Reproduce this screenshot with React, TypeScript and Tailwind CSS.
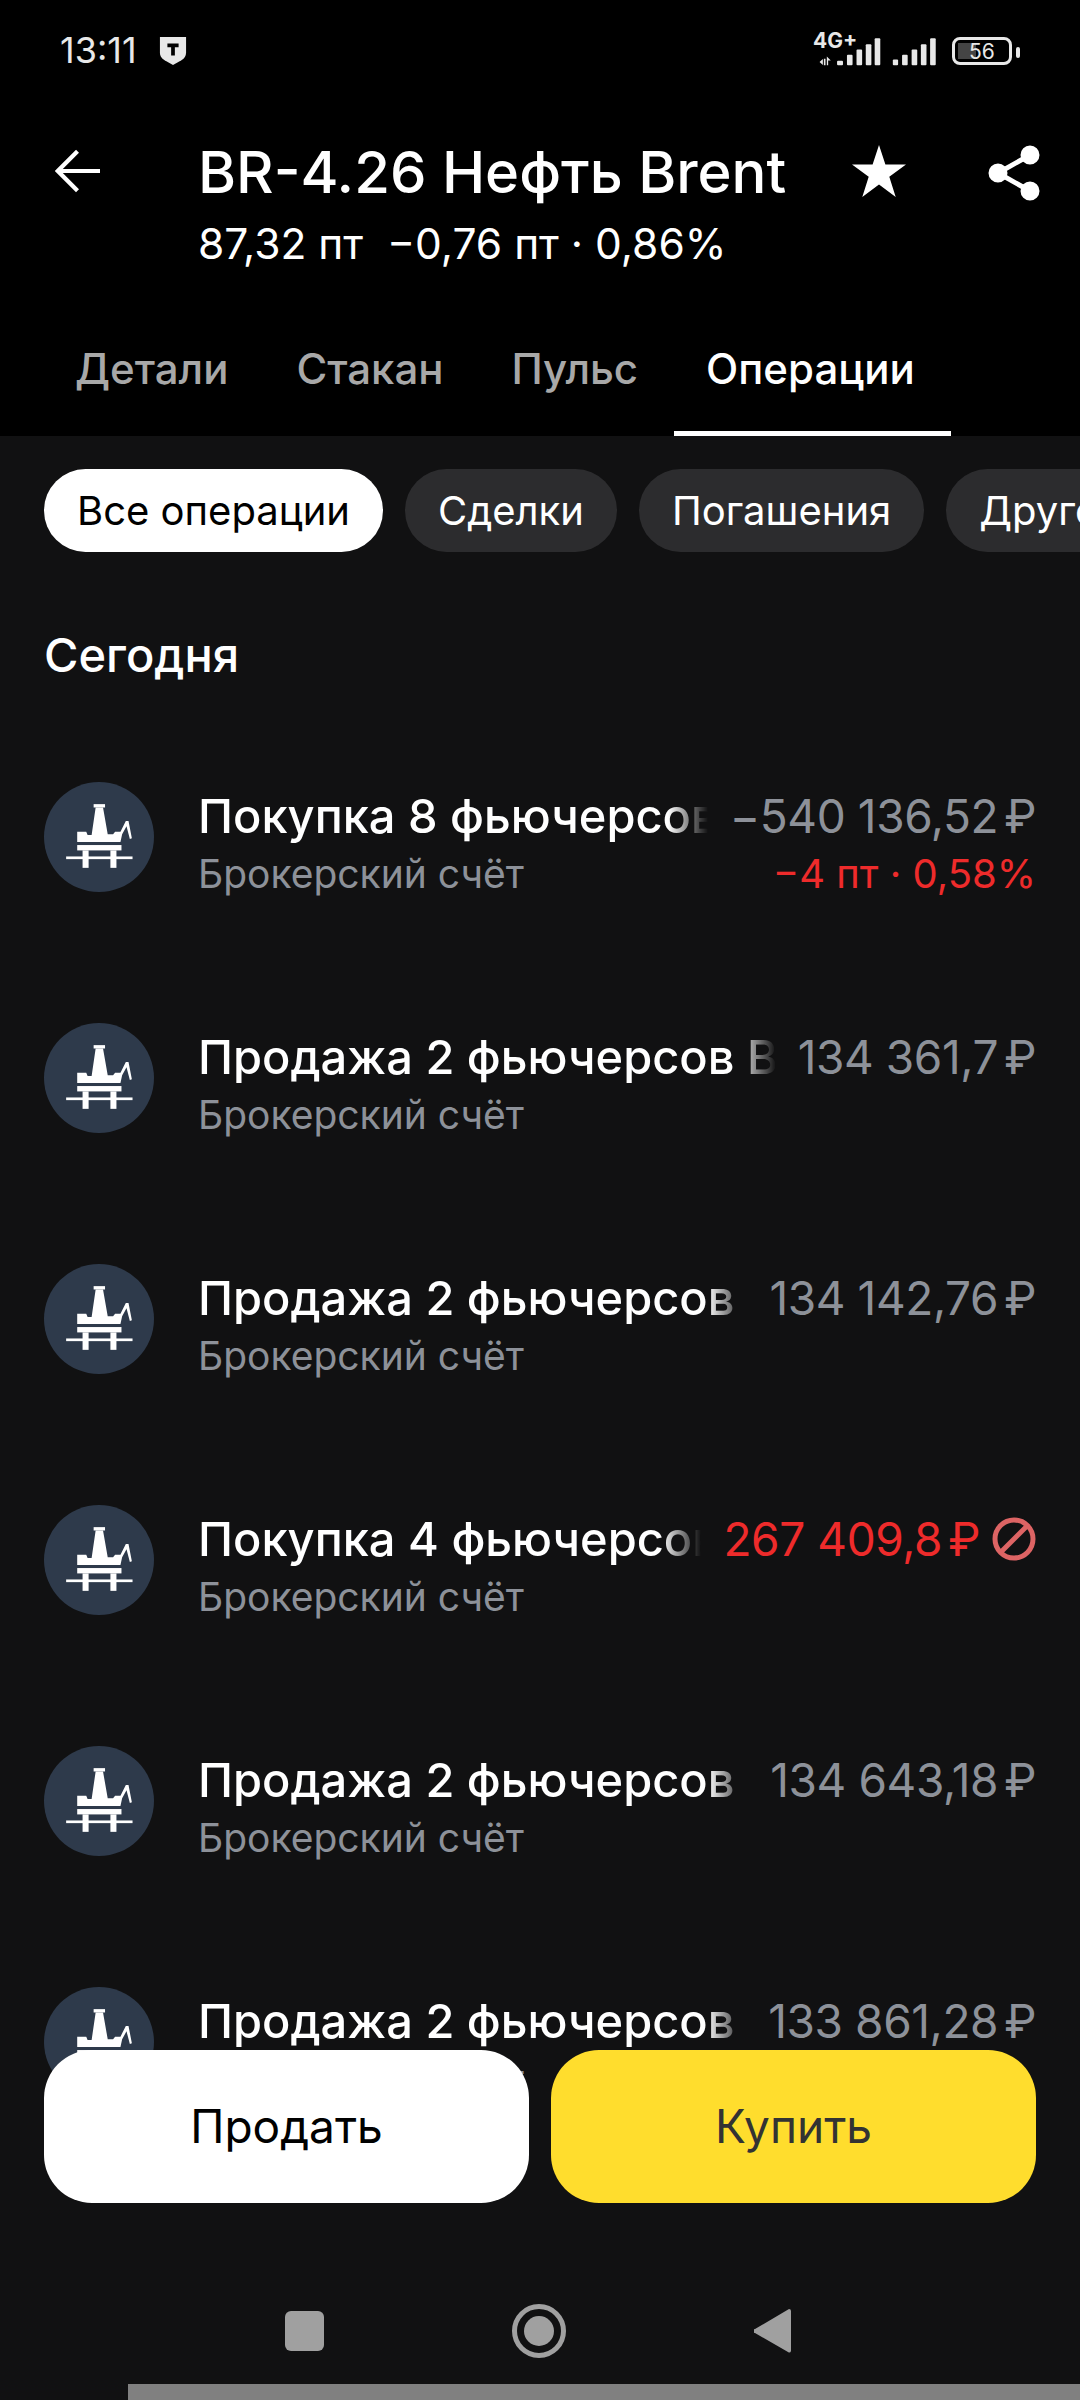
const operations = [
  { title: 'Покупка 8 фьючерсов BR-4.26 Нефть Brent', amount: '−540 136,52', detail: '−4 пт · 0,58%' },
  { title: 'Продажа 2 фьючерсов BR-4.26 Нефть Brent', amount: '134 361,7' },
  { title: 'Продажа 2 фьючерсов BR-4.26 Нефть Brent', amount: '134 142,76' },
  { title: 'Покупка 4 фьючерсов BR-4.26 Нефть Brent', amount: '267 409,8', failed: true },
  { title: 'Продажа 2 фьючерсов BR-4.26 Нефть Brent', amount: '134 643,18' },
  { title: 'Продажа 2 фьючерсов BR-4.26 Нефть Brent', amount: '133 861,28' },
];

function RigIcon() {
  return (
    <svg viewBox="72 66 328 328" className="w-[110px] h-[110px] shrink-0">
      <circle cx="236" cy="230" r="164" fill="#2e3a4b" />
      <g fill="#fff">
        <rect x="220" y="132" width="34" height="10" />
        <polygon points="226,142 248,142 262,222 278,222 284,214 300,214 316,182 324,182 334,234 328,236 318,198 305,222 300,245 171,245 171,214 198,214 202,224 214,224" />
        <rect x="171" y="254" width="132" height="16" />
        <rect x="187" y="270" width="18" height="52" />
        <rect x="270" y="270" width="18" height="52" />
        <rect x="138" y="288" width="198" height="8" />
      </g>
    </svg>
  );
}

function SignalBars() {
  return (
    <svg viewBox="100 40 375 100" className="w-[125px] h-[33px]" fill="#e8e8e8">
      <path d="M118 122l10-9v18zM131 112h5v20h-5zM140 105l12 12h-8v15h-4z" />
      <rect x="171" y="118" width="18" height="14" rx="3" />
      <rect x="201" y="100" width="17" height="32" rx="3" />
      <rect x="230" y="84" width="17" height="48" rx="3" />
      <rect x="258" y="68" width="17" height="64" rx="3" />
      <rect x="285" y="50" width="17" height="82" rx="3" />
      <rect x="340" y="114" width="16" height="18" rx="3" />
      <rect x="368" y="100" width="17" height="32" rx="3" />
      <rect x="397" y="84" width="17" height="48" rx="3" />
      <rect x="425" y="68" width="17" height="64" rx="3" />
      <rect x="453" y="50" width="17" height="82" rx="3" />
    </svg>
  );
}

function StatusBar() {
  return (
    <div className="h-[100px] flex items-center justify-between pl-[60px] pr-[68px] text-[#e8e8e8]">
      <div className="flex items-center gap-[22px]">
        <span className="text-[36px] leading-none">13:11</span>
        <svg viewBox="0 0 30 32" className="w-[28px] h-[30px]">
          <path d="M1 2h28v17q0 5-5 8l-9 5-9-5q-5-3-5-8z" fill="#e8e8e8" />
          <path d="M9 9h12v4h-4v9h-4v-9h-4z" fill="#000" />
        </svg>
      </div>
      <div className="relative flex items-center gap-[14px] mt-[2px]">
        <SignalBars />
        <span className="absolute left-[0px] top-[-5px] text-[21px] leading-none font-bold text-[#e8e8e8]">4G+</span>
        <div className="relative w-[60px] h-[28px] rounded-[8px] border-[3px] border-[#e8e8e8] flex items-center justify-center overflow-hidden">
          <div className="absolute left-[3px] top-[3px] bottom-[3px] w-[18px] bg-[#444]" />
          <span className="relative text-[21px] leading-none text-[#e8e8e8]">56</span>
        </div>
        <div className="absolute right-[-8px] top-[12px] w-[4px] h-[11px] rounded-[2px] bg-[#e8e8e8]" />
      </div>
    </div>
  );
}

function Header() {
  return (
    <div className="bg-black h-[436px] text-white flex flex-col">
      <StatusBar />
      <div className="flex pt-[36px] h-[200px]">
        <div className="w-[198px] pl-[55px] pt-[13px] shrink-0">
          <svg viewBox="0 0 48 46" className="w-[45px] h-[44px]" fill="none" stroke="#fff" strokeWidth="4.5">
            <path d="M2 23h46M24 2L3 23l21 21" />
          </svg>
        </div>
        <div className="flex-1">
          <div className="text-[58px] leading-[72px] font-medium whitespace-nowrap">BR-4.26 Нефть Brent</div>
          <div className="text-[42.5px] leading-[50px] mt-[11px] whitespace-pre">87,32 пт  −0,76 пт · 0,86%</div>
        </div>
        <div className="flex gap-[82px] pr-[40px] pt-[9px]">
          <svg viewBox="0 0 54 52" className="w-[54px] h-[52px]" fill="#fff">
            <polygon points="27,0 33.4,19.6 54,19.6 37.3,31.8 43.7,52 27,39.5 10.3,52 16.7,31.8 0,19.6 20.6,19.6" />
          </svg>
          <svg viewBox="0 0 52 56" className="w-[52px] h-[56px]" fill="#fff" stroke="#fff" strokeWidth="5">
            <circle cx="42" cy="10" r="7" />
            <circle cx="10" cy="28" r="7" />
            <circle cx="42" cy="46" r="7" />
            <path d="M42 10L10 28l32 18" fill="none" />
          </svg>
        </div>
      </div>
      <div className="flex pl-[41px] h-[136px] items-end text-[42px] text-[#a8a8a8] font-[450]">
        <div className="px-[34px] h-[136px] flex items-center">Детали</div>
        <div className="px-[34px] h-[136px] flex items-center">Стакан</div>
        <div className="pl-[34px] pr-[36px] h-[136px] flex items-center">Пульс</div>
        <div className="pl-[32px] pr-[36px] h-[136px] flex items-center pt-[5px] text-white border-b-[5px] border-white">Операции</div>
      </div>
    </div>
  );
}

function Filters() {
  return (
    <div className="flex gap-[22px] pl-[44px] pt-[33px] overflow-hidden text-[40px]">
      <div className="h-[83px] px-[33px] rounded-[42px] bg-white text-black flex items-center shrink-0">Все операции</div>
      <div className="h-[83px] px-[33px] rounded-[42px] bg-[#2c2c2e] text-white flex items-center shrink-0">Сделки</div>
      <div className="h-[83px] px-[33px] rounded-[42px] bg-[#2c2c2e] text-white flex items-center shrink-0">Погашения</div>
      <div className="h-[83px] px-[33px] rounded-[42px] bg-[#2c2c2e] text-white flex items-center shrink-0">Другое</div>
    </div>
  );
}

function OperationRow({ title, amount, detail, failed }: { title: string; amount: string; detail?: string; failed?: boolean }) {
  return (
    <div className="h-[241px] flex items-center gap-[44px] pr-[44px]">
      <RigIcon />
      <div className="flex-1 flex min-w-0 items-start gap-[22px] h-[110px] pt-[5px]">
        <div className="flex-1 min-w-0">
          <div className="text-[47px] leading-[58px] text-white font-medium whitespace-nowrap overflow-hidden [mask-image:linear-gradient(to_left,transparent,black_40px)]">{title}</div>
          <div className="text-[39px] leading-[46px] mt-[6px] text-[#8d9199] whitespace-nowrap">Брокерский счёт</div>
        </div>
        <div className="shrink-0 flex flex-col items-end">
          <div className="flex items-center gap-[12px] leading-[58px]">
            <span className={failed ? 'text-[46px] tracking-[-0.4px] text-[#ee2b2b]' : 'text-[46px] tracking-[-0.4px] text-[#8d9199]'}>
              {amount}
              <span className="ml-[6px]">₽</span>
            </span>
            {failed && (
              <svg viewBox="0 0 44 44" className="w-[44px] h-[44px]" fill="none" stroke="#dd6464" strokeWidth="5">
                <circle cx="22" cy="22" r="19" />
                <path d="M9 35L35 9" />
              </svg>
            )}
          </div>
          {detail && <div className="text-[40px] leading-[46px] mt-[6px] text-[#ee2b2b] whitespace-nowrap">{detail}</div>}
        </div>
      </div>
    </div>
  );
}

function NavBar() {
  return (
    <div className="absolute left-0 right-0 bottom-0 h-[197px] bg-[#111112]">
      <div className="absolute left-[285px] top-[108px] w-[39px] h-[40px] rounded-[6px] bg-[#a0a0a0]" />
      <div className="absolute left-[512px] top-[101px] w-[54px] h-[54px] rounded-full border-[5px] border-[#a0a0a0] flex items-center justify-center">
        <div className="w-[30px] h-[30px] rounded-full bg-[#a0a0a0]" />
      </div>
      <svg viewBox="0 0 38 46" className="absolute left-[754px] top-[105px] w-[38px] h-[46px]" fill="#a0a0a0">
        <path d="M35 1a2 2 0 0 1 2 2v40a2 2 0 0 1-3 1L1 25a2 2 0 0 1 0-4z" />
      </svg>
      <div className="absolute left-[128px] right-0 bottom-0 h-[16px] bg-[#808080]" />
    </div>
  );
}

export default function App() {
  return (
    <div className="relative w-[1080px] h-[2400px] overflow-hidden bg-[#111112] [font-family:Inter,'Noto_Sans',sans-serif]">
      <Header />
      <Filters />
      <div className="pl-[44px] pt-[75px] text-[47px] leading-[56px] font-medium text-white">Сегодня</div>
      <div className="pl-[44px] pt-[33px]">
        {operations.map((op, i) => (
          <OperationRow key={i} {...op} />
        ))}
      </div>
      <NavBar />
      <div className="absolute left-[44px] right-[44px] top-[2050px] h-[153px] flex gap-[22px] text-[46px]">
        <div className="flex-1 rounded-[48px] bg-white text-black flex items-center justify-center">Продать</div>
        <div className="flex-1 rounded-[48px] bg-[#ffdd2d] text-[#333] flex items-center justify-center">Купить</div>
      </div>
    </div>
  );
}
